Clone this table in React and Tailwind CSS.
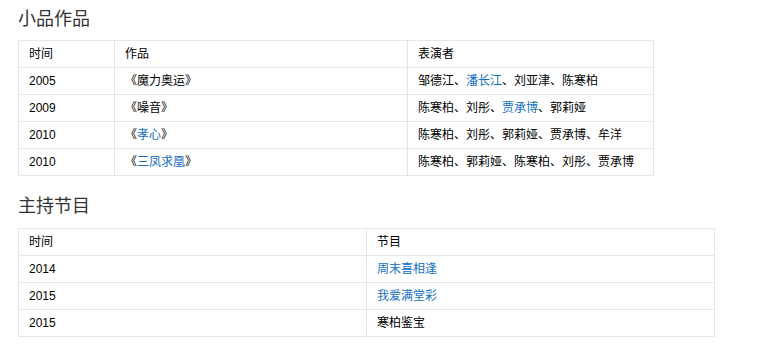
import React from "react";

const F = { fontFamily: '"Liberation Sans", "Noto Sans CJK SC", sans-serif' };

function L({ children }) {
  return <span className="text-[#136ec2]">{children}</span>;
}

const rows1 = [
  ["2005", <>《魔力奥运》</>, <>邹德江、<L>潘长江</L>、刘亚津、陈寒柏</>],
  ["2009", <>《噪音》</>, <>陈寒柏、刘彤、<L>贾承博</L>、郭莉娅</>],
  ["2010", <>《<L>孝心</L>》</>, <>陈寒柏、刘彤、郭莉娅、贾承博、牟洋</>],
  ["2010", <>《<L>三凤求凰</L>》</>, <>陈寒柏、郭莉娅、陈寒柏、刘彤、贾承博</>],
];

const rows2 = [
  ["2014", <L>周末喜相逢</L>],
  ["2015", <L>我爱满堂彩</L>],
  ["2015", <>寒柏鉴宝</>],
];

const td = "border border-[#e6e6e6] h-[27px] px-[10px] py-0 align-middle text-[12px] leading-[16px] text-black";

export default function App() {
  return (
    <div className="bg-white w-[783px] h-[349px] pl-[18px]" style={F}>
      <h2 className="pt-[7px] mb-[9px] text-[18px] leading-[24px] text-[#333] font-normal">小品作品</h2>
      <table className="border-collapse w-[635px] table-fixed">
        <colgroup>
          <col className="w-[96px]" />
          <col className="w-[293px]" />
          <col className="w-[246px]" />
        </colgroup>
        <tbody>
          <tr>
            <td className={td}>时间</td>
            <td className={td}>作品</td>
            <td className={td}>表演者</td>
          </tr>
          {rows1.map((r, i) => (
            <tr key={i}>
              <td className={td}>{r[0]}</td>
              <td className={td}>{r[1]}</td>
              <td className={td}>{r[2]}</td>
            </tr>
          ))}
        </tbody>
      </table>
      <h2 className="mt-[18px] mb-[10px] text-[18px] leading-[24px] text-[#333] font-normal">主持节目</h2>
      <table className="border-collapse w-[696px] table-fixed">
        <colgroup>
          <col className="w-[348px]" />
          <col className="w-[348px]" />
        </colgroup>
        <tbody>
          <tr>
            <td className={td}>时间</td>
            <td className={td}>节目</td>
          </tr>
          {rows2.map((r, i) => (
            <tr key={i}>
              <td className={td}>{r[0]}</td>
              <td className={td}>{r[1]}</td>
            </tr>
          ))}
        </tbody>
      </table>
    </div>
  );
}
